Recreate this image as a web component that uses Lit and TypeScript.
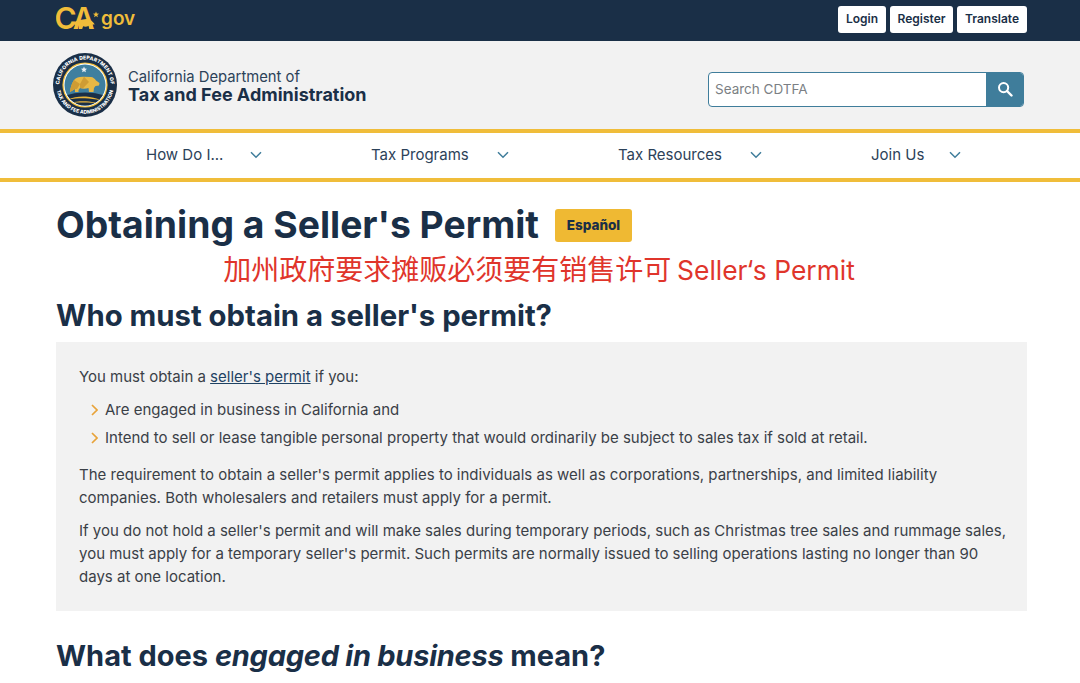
import { LitElement, html, css, svg } from 'lit';
import { customElement } from 'lit/decorators.js';

const NAV = [
  { label: 'How Do I...', width: 75 },
  { label: 'Tax Programs', width: 97 },
  { label: 'Tax Resources', width: 103 },
  { label: 'Join Us', width: 49 },
];

const chevron = svg`<svg class="chev" width="12" height="8" viewBox="0 0 12 8"><path d="M1 1.2 6 6.2 11 1.2" fill="none" stroke="#3f7d9b" stroke-width="1.5"/></svg>`;

const seal = svg`<svg width="64" height="64" viewBox="0 0 64 64" class="seal">
  <defs>
    <path id="arcTop" d="M6.400 32a25.600 25.600 0 0 1 51.200 0"/>
    <path id="arcBot" d="M3.200 32a28.800 28.800 0 0 0 57.600 0"/>
    <clipPath id="inner"><circle cx="32" cy="32" r="20.500"/></clipPath>
  </defs>
  <circle cx="32" cy="32" r="32" fill="#1a2f47"/>
  <text font-size="5.100" font-weight="800" fill="#fff" font-family="Inter, sans-serif" letter-spacing=".1"><textPath href="#arcTop" startOffset="50%" text-anchor="middle">CALIFORNIA DEPARTMENT OF</textPath></text>
  <text font-size="5" font-weight="800" fill="#fff" font-family="Inter, sans-serif"><textPath href="#arcBot" startOffset="50%" text-anchor="middle">TAX AND FEE ADMINISTRATION</textPath></text>
  <circle cx="32" cy="32" r="22.600" fill="#f0bd3a"/>
  <circle cx="32" cy="32" r="21.400" fill="#fff"/>
  <g clip-path="url(#inner)">
    <rect width="64" height="64" fill="#3f7f9f"/>
    <path d="M31 13.600l.9 2 2.100.2-1.600 1.400.5 2.100-1.900-1.100-1.900 1.100.5-2.100-1.600-1.400 2.100-.2z" fill="#e8eef2"/>
    <path d="M17 39C17.500 34 19 30 21 27C23 24.500 27 23.500 31 23.800L38 24C40 24 42 26 43 27.500L46.500 30L46 32.500L42.500 33L41 35L40.500 39L36 39L35.500 35C32.500 36 29 35.800 27 35L25.500 37L25.500 39L22 39L22 36Z" fill="#e8b845"/>
    <path d="M21 27L27 31L24 36L22 36L17 39C17.500 34 19 30 21 27ZM31 23.800L36 29L30 35.300L27 35L27 31Z" fill="#cf9c34"/>
    <path d="M8 44c8-3 16-4.500 24-4.500 8 0 16 1.500 24 4.500v20H8z" fill="#1a2f47"/>
    <path d="M15 46.500c5-2.500 12-3.300 18-2.900 5 .3 10 1.700 15 3.800-6-1-11-2-16-2.100-6-.1-11 .2-17 1.200zM17 50c5-1.500 11-2 16-1.700 4 .2 8 .9 12 2.200-5-.6-9-1-13-1-6 0-10 .1-15 .5z" fill="#eab53a"/>
  </g>
</svg>`;

@customElement('app-root')
export class AppRoot extends LitElement {
  static styles = css`
    :host {
      display: block;
      font-family: 'Inter', 'Noto Sans CJK SC', sans-serif;
      color: #3a4047;
      background: #fff;
    }
    .top {
      height: 41px;
      box-sizing: border-box;
      background: #1a2f47;
      display: flex;
      align-items: center;
      justify-content: space-between;
      padding: 0 53px 4px 56px;
    }
    .ca {
      display: block;
    }
    .top-btns {
      display: flex;
      gap: 4px;
      margin-top: 2px;
    }
    .top-btns button {
      height: 27px;
      padding: 0 0 2px;
      background: #fff;
      border: none;
      border-radius: 3px;
      color: #1a2f47;
      font: 600 12px 'Inter', sans-serif;
    }
    .b1 { width: 48px; }
    .b2 { width: 63px; }
    .b3 { width: 70px; }
    .head {
      height: 88px;
      box-sizing: border-box;
      background: #f2f2f2;
      display: flex;
      align-items: center;
      justify-content: space-between;
      padding: 0 56px 0 52px;
    }
    .brand {
      display: flex;
      align-items: center;
      gap: 11px;
    }
    .seal {
      display: block;
      margin-left: 1px;
    }
    .brand-text {
      color: #1a2f47;
      margin-top: 1px;
    }
    .dept {
      font-size: 14.8px;
      line-height: 18px;
      color: #2c4259;
    }
    .agency {
      font-size: 18px;
      line-height: 18px;
      font-weight: 700;
    }
    .search {
      width: 316px;
      height: 35px;
      box-sizing: border-box;
      display: flex;
      margin-top: 8px;
      border: 1px solid #3f7d9b;
      border-radius: 4px;
      background: #fff;
      overflow: hidden;
    }
    .search .ph {
      flex: 1;
      padding-left: 6px;
      line-height: 33px;
      font-size: 13.5px;
      color: #7b7f84;
    }
    .search .go {
      width: 37px;
      background: #3f7d9b;
      display: flex;
      align-items: center;
      justify-content: center;
    }
    nav {
      height: 53px;
      box-sizing: border-box;
      border-top: 4px solid #f0bd3a;
      border-bottom: 4px solid #f0bd3a;
      background: #fff;
      display: flex;
      align-items: center;
      gap: 109px;
      padding: 0 0 2px 146px;
    }
    .nav-item {
      display: flex;
      align-items: center;
      gap: 29px;
      font-size: 15px;
      color: #2c4259;
      white-space: nowrap;
    }
    .chev {
      display: block;
    }
    main {
      padding: 20px 53px 0 56px;
    }
    .title {
      display: flex;
      align-items: center;
      gap: 16px;
    }
    h1 {
      margin: 0;
      font-size: 37.3px;
      line-height: 46px;
      font-weight: 700;
      color: #1a2f47;
    }
    .badge {
      width: 77px;
      height: 33px;
      background: #efb933;
      border-radius: 3px;
      color: #1a2f47;
      font-size: 13.5px;
      font-weight: 800;
      line-height: 33px;
      text-align: center;
      margin-top: 1px;
    }
    .red {
      margin-left: -5px;
      text-align: center;
      font-family: 'Inter', 'Noto Sans CJK SC', sans-serif;
      font-size: 28px;
      line-height: 44px;
      color: #e0352b;
    }
    .red span {
      font-size: 26.4px;
      margin-left: -2px;
    }
    h2 {
      margin: 4px 0 0;
      font-size: 29.3px;
      line-height: 40px;
      font-weight: 700;
      color: #1a2f47;
    }
    .box {
      margin-top: 6px;
      background: #f2f2f2;
      padding: 23px 20px 23px 23px;
      font-size: 15px;
      line-height: 23px;
    }
    .box p {
      margin: 0 0 10px;
    }
    .box p:last-child {
      margin: 0;
    }
    .box a {
      color: #1f4263;
      text-decoration: underline;
    }
    ul {
      list-style: none;
      margin: 0 0 14px;
      padding: 0;
    }
    li {
      display: flex;
      align-items: center;
      gap: 7px;
      margin-bottom: 5px;
      padding-left: 12px;
    }
    li:last-child {
      margin-bottom: 0;
    }
    h2.next {
      margin-top: 25px;
      font-size: 29px;
    }
    h2.next em {
      letter-spacing: -0.25px;
    }
  `;

  render() {
    return html`
      <div class="top">
        <svg class="ca" width="80" height="37" viewBox="0 -4 80 37">
          <text x="-1.500" y="25" font-family="Inter, sans-serif" font-size="30" font-weight="600" letter-spacing="-3" fill="#f0bd3a">CA</text>
          <path transform="translate(-8 0)" fill="#f0bd3a" d="M25 20.500c1.200-2.600 3.600-4.400 6.600-4.600 2.400-.2 4.200-1 6.800-1 2.800 0 4.700 1.400 6.400 3 .9.800 1.600 1.800 1.900 2.600l-2.200.1.300 4.400h-3.400l-.7-3.200c-1.800 1-3.800 1.100-5.600.5l-.9 2.700h-3.400l.2-3.600c-1.600-.3-2.900-.5-3.900 0l-.4-1z"/>
          <path fill="#f0bd3a" d="M40 7.400l.8 2.200 2.300.1-1.800 1.400.6 2.200-1.900-1.300-1.900 1.300.6-2.200-1.800-1.400 2.300-.1z"/>
          <text x="45" y="20.500" font-family="Inter, sans-serif" font-size="19" font-weight="600" fill="#f0bd3a">gov</text>
        </svg>
        <div class="top-btns">
          <button class="b1">Login</button>
          <button class="b2">Register</button>
          <button class="b3">Translate</button>
        </div>
      </div>
      <header class="head">
        <div class="brand">
          ${seal}
          <div class="brand-text">
            <div class="dept">California Department of</div>
            <div class="agency">Tax and Fee Administration</div>
          </div>
        </div>
        <div class="search">
          <div class="ph">Search CDTFA</div>
          <div class="go">
            <svg width="16" height="16" viewBox="0 0 16 16"><circle cx="6.600" cy="6.600" r="4.600" fill="none" stroke="#fff" stroke-width="2"/><path d="M10 10l4.500 4.500" stroke="#fff" stroke-width="2.400" stroke-linecap="round"/></svg>
          </div>
        </div>
      </header>
      <nav>
        ${NAV.map((n) => html`<div class="nav-item"><span style="width:${n.width}px">${n.label}</span>${chevron}</div>`)}
      </nav>
      <main>
        <div class="title">
          <h1>Obtaining a Seller's Permit</h1>
          <div class="badge">Español</div>
        </div>
        <div class="red">加州政府要求摊贩必须要有销售许可 <span>Seller‘s Permit</span></div>
        <h2>Who must obtain a seller's permit?</h2>
        <section class="box">
          <p>You must obtain a <a href="#">seller's permit</a> if you:</p>
          <ul>
            <li>${this._arrow()}<span>Are engaged in business in California and</span></li>
            <li>${this._arrow()}<span>Intend to sell or lease tangible personal property that would ordinarily be subject to sales tax if sold at retail.</span></li>
          </ul>
          <p>The requirement to obtain a seller's permit applies to individuals as well as corporations, partnerships, and limited liability companies. Both wholesalers and retailers must apply for a permit.</p>
          <p>If you do not hold a seller's permit and will make sales during temporary periods, such as Christmas tree sales and rummage sales, you must apply for a temporary seller's permit. Such permits are normally issued to selling operations lasting no longer than 90 days at one location.</p>
        </section>
        <h2 class="next">What does <em>engaged in business</em> mean?</h2>
      </main>
    `;
  }

  private _arrow() {
    return html`<svg width="7" height="12" viewBox="0 0 7 12"><path d="M1 1l5 5-5 5" fill="none" stroke="#e8a33a" stroke-width="1.700"/></svg>`;
  }
}
